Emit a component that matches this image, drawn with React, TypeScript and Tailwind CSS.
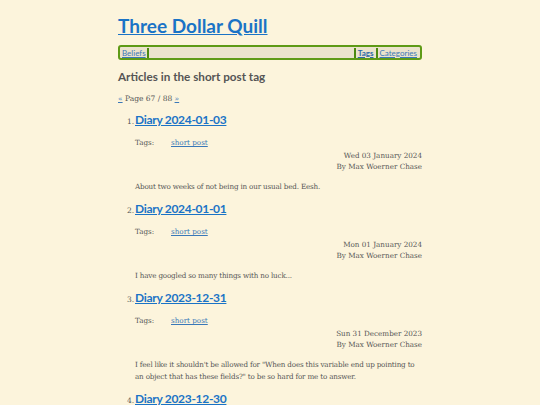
const posts = [
  {
    title: "Diary 2024-01-03",
    date: "Wed 03 January 2024",
    summary: "About two weeks of not being in our usual bed. Eesh.",
  },
  {
    title: "Diary 2024-01-01",
    date: "Mon 01 January 2024",
    summary: "I have googled so many things with no luck...",
  },
  {
    title: "Diary 2023-12-31",
    date: "Sun 31 December 2023",
    summary:
      'I feel like it shouldn\'t be allowed for "When does this variable end up pointing to an object that has these fields?" to be so hard for me to answer.',
  },
  {
    title: "Diary 2023-12-30",
    date: "Sat 30 December 2023",
    summary: "",
  },
];

const heading = "font-['Lato','Open_Sans',sans-serif]";
const body = "font-['DejaVu_Serif','Liberation_Serif',serif]";

export default function App() {
  return (
    <div className="h-[405px] overflow-hidden bg-[#fcf4dc] text-[#555]">
      <div className="mx-auto w-[304px] pt-[13px]">
        <h1 className={`${heading} text-[19px] font-bold leading-[26px]`}>
          <a href="#" className="text-[#1a73c6] underline">
            Three Dollar Quill
          </a>
        </h1>

        <nav
          className={`${heading} mt-[6px] flex h-[15px] items-center rounded-[3px] border-2 border-[#5e9a16] bg-[#ebe3cc] px-[1px] text-[8px] leading-none`}
        >
          <a href="#" className="px-[1px] text-[#3a78b8] underline">
            Beliefs
          </a>
          <span className="h-[10px] w-[2px] bg-[#4c8a10]" />
          <span className="flex-1" />
          <span className="h-[10px] w-[2px] bg-[#4c8a10]" />
          <a href="#" className="px-[2px] font-bold text-[#2d6aa8] underline">
            Tags
          </a>
          <span className="h-[10px] w-[2px] bg-[#4c8a10]" />
          <a href="#" className="px-[2px] text-[#3a78b8] underline">
            Categories
          </a>
        </nav>

        <h2 className={`${heading} mt-[8px] text-[11.7px] font-bold leading-[16px] text-[#555]`}>
          Articles in the short post tag
        </h2>

        <p className={`${body} mt-[10px] text-[7.5px] leading-[10px]`}>
          <a href="#" className="text-[#3a78b8] underline">
            «
          </a>{" "}
          Page 67 / 88{" "}
          <a href="#" className="text-[#3a78b8] underline">
            »
          </a>
        </p>

        <ol className="mt-[7px] pl-[17px]">
          {posts.map((post, i) => (
            <li key={post.title} className="mb-[7px]">
              <div className="flex items-baseline">
                <span className={`${body} -ml-[8px] w-[8px] text-[7.5px]`}>{i + 1}.</span>
                <a
                  href="#"
                  className={`${heading} text-[12px] font-bold leading-[18px] tracking-[-0.3px] text-[#1a73c6] underline`}
                >
                  {post.title}
                </a>
              </div>
              <div className={`${body} text-[7.2px] leading-[11px]`}>
                <div className="mt-[8px] flex">
                  <span className="w-[36px]">Tags:</span>
                  <a href="#" className="text-[#3a78b8] underline">
                    short post
                  </a>
                </div>
                <div className="mt-[2px] text-right">{post.date}</div>
                <div className="text-right">By Max Woerner Chase</div>
                {post.summary && (
                  <p className="mt-[9px] leading-[12px] tracking-[-0.18px]">{post.summary}</p>
                )}
              </div>
            </li>
          ))}
        </ol>
      </div>
    </div>
  );
}
